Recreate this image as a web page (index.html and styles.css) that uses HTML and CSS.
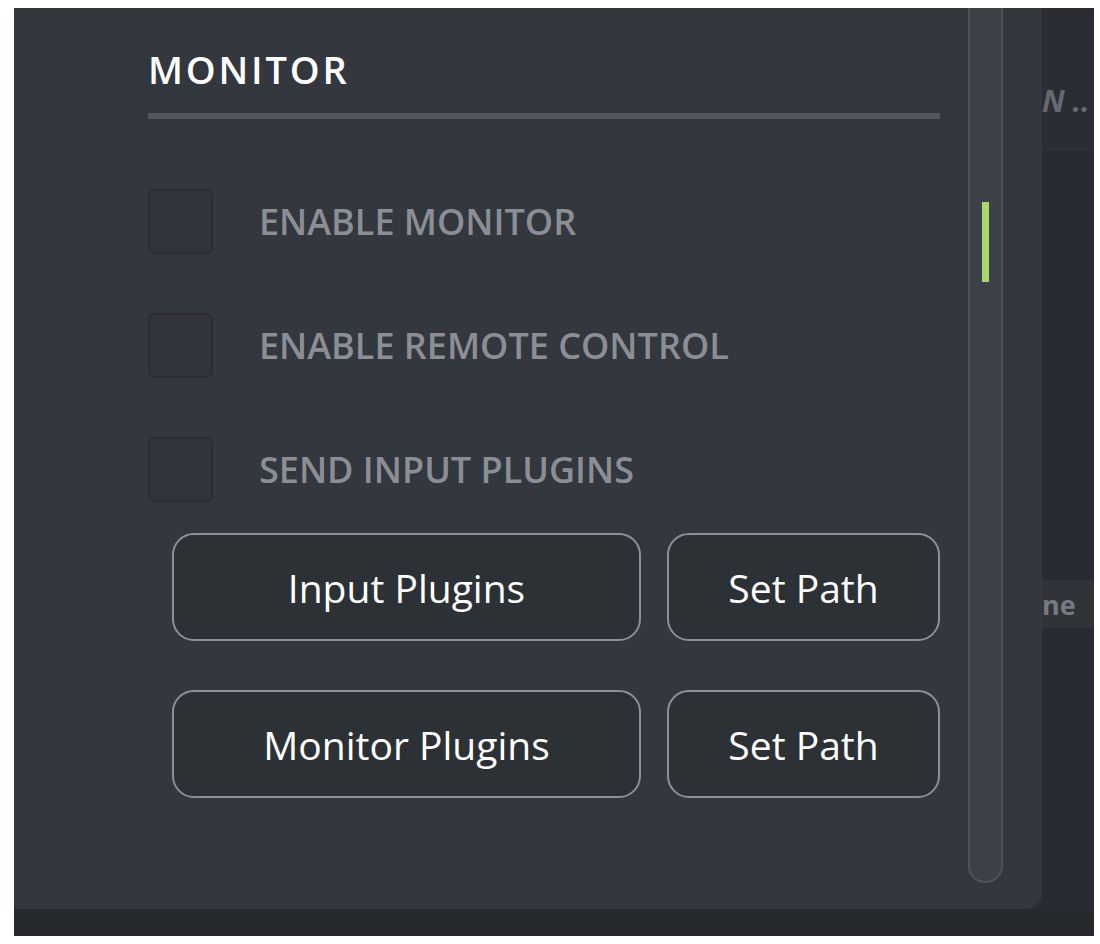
FILE: index.html
```html
<!DOCTYPE html>
<html lang="en">
<head>
  <meta charset="UTF-8">
  <meta name="viewport" content="width=device-width, initial-scale=1.0">
  <title>Monitor Settings</title>
  <link rel="stylesheet" href="styles.css">
</head>
<body>
  <div class="screen">
    <div class="screen-main">
      <!-- Settings drawer -->
      <aside class="drawer">
        <div class="drawer-body">
          <h2 class="drawer-title">MONITOR</h2>
          <div class="drawer-rule"></div>

          <label class="check-row">
            <span class="check-box"></span>
            <span class="check-label">ENABLE MONITOR</span>
          </label>
          <label class="check-row">
            <span class="check-box"></span>
            <span class="check-label">ENABLE REMOTE CONTROL</span>
          </label>
          <label class="check-row">
            <span class="check-box"></span>
            <span class="check-label">SEND INPUT PLUGINS</span>
          </label>

          <div class="btn-row">
            <button class="btn btn-wide">Input Plugins</button>
            <button class="btn btn-narrow">Set Path</button>
          </div>
          <div class="btn-row">
            <button class="btn btn-wide">Monitor Plugins</button>
            <button class="btn btn-narrow">Set Path</button>
          </div>
        </div>

        <div class="scroll-track">
          <div class="scroll-thumb"></div>
        </div>
      </aside>

      <!-- Page behind the drawer -->
      <div class="behind">
        <div class="behind-head">
          <span class="behind-title">N ..</span>
        </div>
        <div class="behind-row">
          <span class="behind-cell">ne</span>
        </div>
      </div>
    </div>
    <div class="screen-foot"></div>
  </div>
</body>
</html>
```

FILE: styles.css
```css
* {
  margin: 0;
  padding: 0;
  box-sizing: border-box;
  font-family: "Open Sans", "Liberation Sans", sans-serif;
}

body {
  background: #fff;
}

.screen {
  margin: 8px 6px 8px 14px;
  width: 1080px;
  height: 928px;
  background: #282c32;
  display: flex;
  flex-direction: column;
  overflow: hidden;
}

.screen-main {
  display: flex;
  height: 901px;
}

/* Drawer */
.drawer {
  width: 1028px;
  flex-shrink: 0;
  display: flex;
  gap: 28px;
  padding: 0 39px 0 134px;
  background: #33373e;
  border-radius: 0 0 16px 0;
}

.drawer-body {
  width: 792px;
  padding-top: 42px;
}

.drawer-title {
  font-size: 38px;
  line-height: 1;
  font-weight: 600;
  letter-spacing: 2.8px;
  color: #fff;
}

.drawer-rule {
  height: 6px;
  margin: 25px 0 70px;
  background: #52565e;
}

.check-row {
  display: flex;
  align-items: center;
  gap: 46px;
  height: 65px;
  margin-bottom: 59px;
}

.check-row:last-of-type {
  margin-bottom: 31px;
}

.check-box {
  width: 65px;
  height: 65px;
  border: 2px solid #2a2e33;
  border-radius: 7px;
  background: #31353b;
}

.check-label {
  font-size: 36px;
  font-weight: 600;
  color: #8b8f95;
}

.btn-row {
  display: flex;
  gap: 26px;
  padding-left: 24px;
  margin-bottom: 49px;
}

.btn {
  height: 108px;
  border: 2px solid #8d9197;
  border-radius: 22px;
  background: #2c3135;
  color: #fff;
  font-size: 39px;
  font-weight: 500;
}

.btn-wide {
  width: 469px;
}

.btn-narrow {
  width: 273px;
}

/* Scrollbar */
.scroll-track {
  width: 35px;
  height: 879px;
  margin-top: -4px;
  border: 2px solid #4e535a;
  border-radius: 0 0 17px 17px;
  background: #3c4148;
  padding-top: 196px;
}

.scroll-thumb {
  width: 7px;
  height: 80px;
  margin: 0 auto;
  background: #a8d86c;
}

/* Page behind */
.behind {
  flex: 1;
  overflow: hidden;
  white-space: nowrap;
}

.behind-head {
  height: 142px;
  padding-top: 78px;
  border-bottom: 1px solid #30343a;
  background: #2a2e34;
}

.behind-title {
  font-size: 30px;
  font-weight: 700;
  font-style: italic;
  line-height: 1;
  color: #666a70;
}

.behind-row {
  margin-top: 430px;
  height: 48px;
  display: flex;
  align-items: center;
  background: #303439;
}

.behind-cell {
  font-size: 27px;
  font-weight: 700;
  color: #767a80;
}

.screen-foot {
  flex: 1;
  background: #262a2f;
}
```
